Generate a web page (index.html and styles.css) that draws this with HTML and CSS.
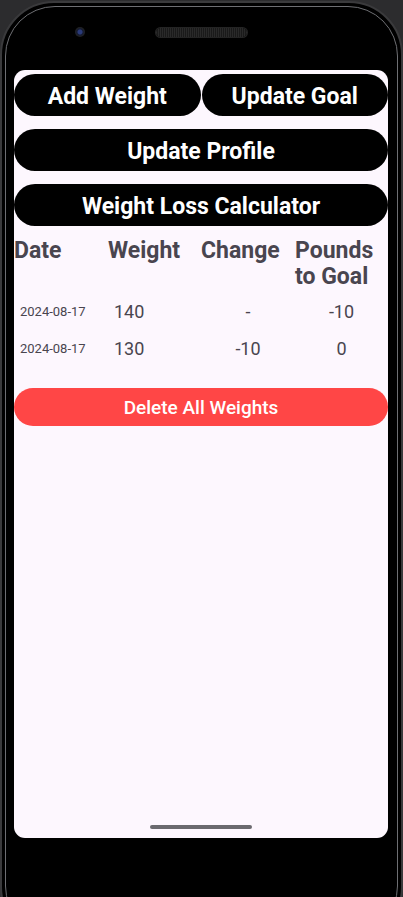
FILE: index.html
```html
<!DOCTYPE html>
<html>
<head>
<meta charset="utf-8">
<link rel="stylesheet" href="styles.css">
</head>
<body>
<div class="device">
  <div class="rim"></div>
  <div class="topbar">
    <div class="camera"></div>
    <div class="speaker"></div>
  </div>
  <div class="screen">
    <div class="btn-row">
      <button class="pill">Add Weight</button>
      <button class="pill">Update Goal</button>
    </div>
    <button class="pill wide">Update Profile</button>
    <button class="pill wide">Weight Loss Calculator</button>
    <div class="table">
      <div class="th">Date</div>
      <div class="th">Weight</div>
      <div class="th">Change</div>
      <div class="th">Pounds to Goal</div>

      <div class="td date first">2024-08-17</div>
      <div class="td weight first">140</div>
      <div class="td center first">-</div>
      <div class="td center first">-10</div>

      <div class="td date">2024-08-17</div>
      <div class="td weight">130</div>
      <div class="td center">-10</div>
      <div class="td center">0</div>
    </div>
    <button class="delete">Delete All Weights</button>
    <div class="spacer"></div>
    <div class="home"></div>
  </div>
</div>
</body>
</html>
```
FILE: styles.css
```css
html, body {
  margin: 0;
  padding: 0;
  background: #2c2c2e;
  width: 403px;
  height: 897px;
  overflow: hidden;
  font-family: Roboto, "Noto Sans", sans-serif;
}
.device {
  position: relative;
  width: 403px;
  height: 940px;
  margin-top: 1px;
  background: #000;
  border-radius: 54px;
  box-sizing: border-box;
  border: 2px solid #3a3a3c;
  display: flex;
  flex-direction: column;
  align-items: flex-start;
}
.rim {
  position: absolute;
  inset: 3px;
  border-radius: 50px;
  border: 1.5px solid #6e6f73;
  pointer-events: none;
}
.topbar {
  position: relative;
  width: 100%;
  height: 67px;
  flex: none;
}
.camera {
  position: absolute;
  left: 73px;
  top: 24px;
  width: 10px;
  height: 10px;
  border-radius: 50%;
  background: radial-gradient(circle at 50% 50%, #2a3a7a 0 2px, #141a30 3px, #222 5px);
}
.speaker {
  position: absolute;
  left: 154px;
  top: 25px;
  width: 91px;
  height: 9px;
  border-radius: 5px;
  background: repeating-linear-gradient(90deg, #2a2a2a 0 1px, #1a1a1a 1px 2px);
  box-shadow: 0 0 0 1px #242424;
}
.screen {
  width: 374px;
  height: 768px;
  margin-left: 12px;
  flex: none;
  background: #fdf7fe;
  border-radius: 11px;
  display: flex;
  flex-direction: column;
  box-sizing: border-box;
  padding-top: 4px;
}
.btn-row {
  display: flex;
  gap: 1px;
}
.pill {
  font-family: Roboto, sans-serif;
  font-weight: 700;
  font-size: 23px;
  color: #fff;
  background: #000;
  border: none;
  border-radius: 21px;
  height: 42px;
  box-sizing: border-box;
  padding: 4px 0 0 0;
  flex: 1;
  line-height: 38px;
}
.pill.wide {
  margin-top: 13px;
  flex: none;
  width: 100%;
}
.table {
  display: grid;
  grid-template-columns: 94px 93px 94px 93px;
  margin-top: 12px;
  color: #49454f;
}
.th {
  font-weight: 700;
  font-size: 23px;
  line-height: 26px;
}
.td {
  font-size: 18px;
  height: 37px;
  line-height: 37px;
}
.td.first {
  margin-top: 3px;
}
.td.date {
  font-size: 13px;
  padding-left: 6px;
}
.td.weight {
  padding-left: 6px;
}
.td.center {
  text-align: center;
}
.delete {
  margin-top: 21px;
  height: 38px;
  border: none;
  border-radius: 19px;
  background: #ff4646;
  color: #fff;
  font-family: Roboto, sans-serif;
  font-weight: 500;
  font-size: 19px;
  padding: 0;
}
.spacer {
  flex: 1;
}
.home {
  align-self: center;
  width: 102px;
  height: 4px;
  border-radius: 2px;
  background: #6b6a6f;
  margin-bottom: 9px;
}
```
